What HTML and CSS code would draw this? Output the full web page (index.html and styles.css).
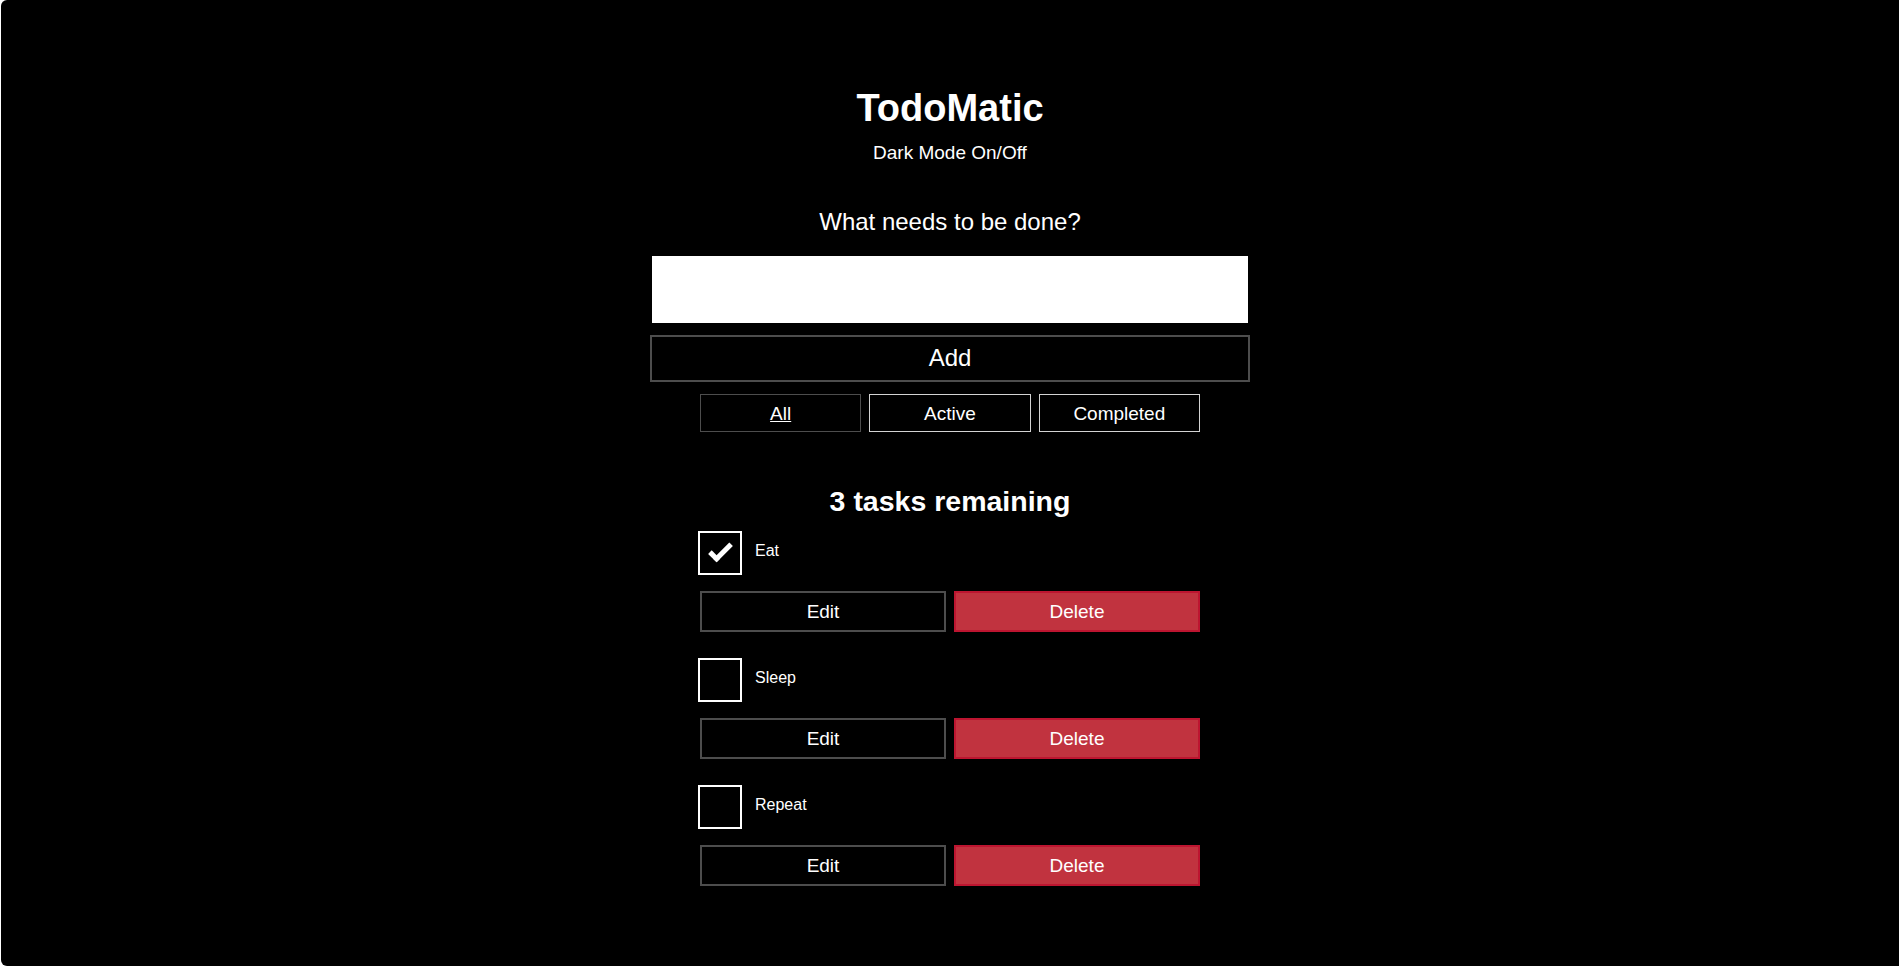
FILE: index.html
```html
<!DOCTYPE html>
<html lang="en">
<head>
<meta charset="utf-8">
<title>TodoMatic</title>
<link rel="stylesheet" href="styles.css">
</head>
<body>
<div class="page">
  <div class="app">
    <h1 class="title">TodoMatic</h1>
    <button class="mode-btn" type="button">Dark Mode On/Off</button>
    <form class="new-todo">
      <label class="new-label" for="new-todo-input">What needs to be done?</label>
      <input class="new-input" id="new-todo-input" type="text" autocomplete="off">
      <button class="add-btn" type="button">Add</button>
    </form>
    <div class="filters">
      <button class="filter-btn pressed" type="button">All</button>
      <button class="filter-btn" type="button">Active</button>
      <button class="filter-btn" type="button">Completed</button>
    </div>
    <h2 class="heading">3 tasks remaining</h2>
    <ul class="todo-list">
      <li class="todo">
        <div class="c-cb">
          <input id="todo-0" type="checkbox" checked>
          <label class="todo-label" for="todo-0">Eat</label>
        </div>
        <div class="btn-group">
          <button class="btn-edit" type="button">Edit</button>
          <button class="btn-delete" type="button">Delete</button>
        </div>
      </li>
      <li class="todo">
        <div class="c-cb">
          <input id="todo-1" type="checkbox">
          <label class="todo-label" for="todo-1">Sleep</label>
        </div>
        <div class="btn-group">
          <button class="btn-edit" type="button">Edit</button>
          <button class="btn-delete" type="button">Delete</button>
        </div>
      </li>
      <li class="todo">
        <div class="c-cb">
          <input id="todo-2" type="checkbox">
          <label class="todo-label" for="todo-2">Repeat</label>
        </div>
        <div class="btn-group">
          <button class="btn-edit" type="button">Edit</button>
          <button class="btn-delete" type="button">Delete</button>
        </div>
      </li>
    </ul>
  </div>
</div>
</body>
</html>
```

FILE: styles.css
```css
*, *::before, *::after {
  box-sizing: border-box;
}

html, body {
  margin: 0;
  padding: 0;
  background: #ffffff;
}

body {
  font-family: "Liberation Sans", Arial, sans-serif;
  color: #ffffff;
}

.page {
  margin-left: 1px;
  height: 966px;
  background: #000000;
  border-radius: 6px 0 0 6px;
  overflow: hidden;
}

.app {
  display: flex;
  flex-direction: column;
  align-items: center;
  padding-top: 86px;
}

.title {
  margin: 0;
  font-size: 38px;
  line-height: 44px;
  font-weight: 700;
  text-align: center;
}

.mode-btn {
  margin: 10px 0 0;
  padding: 0;
  border: none;
  background: transparent;
  color: #ffffff;
  font-family: inherit;
  font-size: 19px;
  line-height: 25px;
  cursor: pointer;
}

.new-todo {
  display: flex;
  flex-direction: column;
  align-items: center;
  width: 600px;
}

.new-label {
  margin-top: 43px;
  font-size: 24px;
  line-height: 28px;
  font-weight: 300;
  text-align: center;
}

.new-input {
  margin: 18px 0 0;
  width: 600px;
  height: 71px;
  padding: 20px;
  border: 2px solid #000000;
  border-radius: 0;
  background: #ffffff;
  font-family: inherit;
  font-size: 24px;
  color: #000000;
}

.add-btn {
  margin: 10px 0 0;
  width: 600px;
  padding: 7px 10px 8px;
  border: 2px solid #4d4d4d;
  background: #000000;
  color: #ffffff;
  font-family: inherit;
  font-size: 24px;
  line-height: 28px;
  cursor: pointer;
}

.filters {
  display: flex;
  gap: 8px;
  width: 500px;
  margin-top: 12px;
}

.filter-btn {
  flex: 1 1 0;
  margin: 0;
  padding: 8px 10px 7px;
  border: 1px solid #d3d3d3;
  background: #000000;
  color: #ffffff;
  font-family: inherit;
  font-size: 19px;
  line-height: 21px;
  cursor: pointer;
}

.filter-btn.pressed {
  border-color: #4d4d4d;
  text-decoration: underline;
}

.heading {
  margin: 51px 0 0;
  font-size: 28.5px;
  line-height: 37.5px;
  font-weight: 700;
  text-align: center;
}

.todo-list {
  list-style: none;
  margin: 12.5px 0 0;
  padding: 0;
  width: 500px;
  display: flex;
  flex-direction: column;
  gap: 28px;
}

.todo {
  display: flex;
  flex-direction: column;
  gap: 14px;
}

.c-cb {
  position: relative;
  min-height: 44px;
  padding-left: 40px;
  font-size: 16px;
  line-height: 20px;
}

.c-cb > input[type="checkbox"] {
  position: absolute;
  top: -2px;
  left: -2px;
  width: 44px;
  height: 44px;
  margin: 0;
  opacity: 0;
  z-index: 1;
  cursor: pointer;
}

.todo-label {
  display: inline-block;
  padding: 8px 15px 5px;
  cursor: pointer;
}

.todo-label::before {
  content: "";
  position: absolute;
  top: -2px;
  left: -2px;
  width: 44px;
  height: 44px;
  border: 2px solid #ffffff;
}

.todo-label::after {
  box-sizing: content-box;
  content: "";
  position: absolute;
  top: 11px;
  left: 9px;
  width: 18px;
  height: 7px;
  transform: rotate(-45deg);
  border: solid #ffffff;
  border-width: 0 0 5px 5px;
  opacity: 0;
}

.c-cb > input[type="checkbox"]:checked + .todo-label::after {
  opacity: 1;
}

.btn-group {
  display: flex;
  gap: 8px;
}

.btn-edit,
.btn-delete {
  flex: 1 1 0;
  margin: 0;
  padding: 8px 10px 7px;
  border: 2px solid #4d4d4d;
  background: #000000;
  color: #ffffff;
  font-family: inherit;
  font-size: 19px;
  line-height: 22px;
  cursor: pointer;
}

.btn-delete {
  background: #c1333f;
  border-color: #bd1530;
}
```
